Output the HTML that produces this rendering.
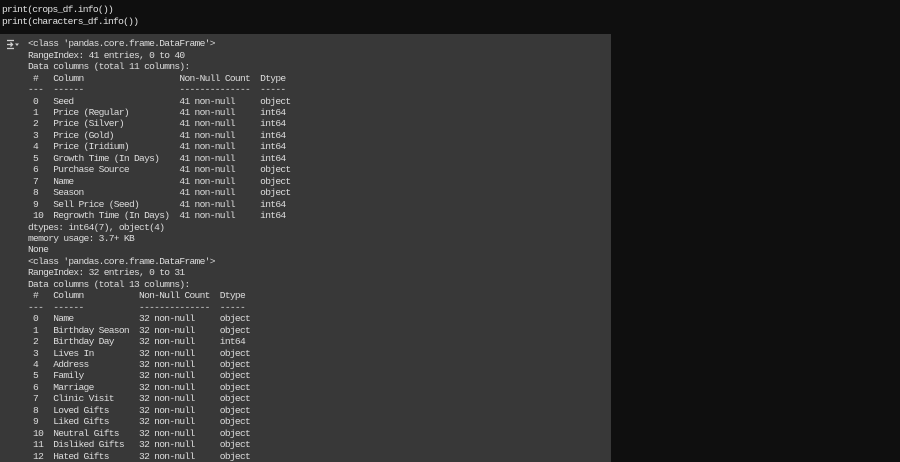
<!DOCTYPE html>
<html><head><meta charset="utf-8"><style>
html,body{margin:0;padding:0;width:900px;height:462px;overflow:hidden;background:#0f0f0f;}
pre{margin:0;font-family:"Liberation Mono","DejaVu Sans Mono",monospace;font-size:9.6px;letter-spacing:-0.71px;line-height:11.45px;color:#dcdcdc;position:absolute;white-space:pre;}
#code{left:2px;top:3.5px;line-height:12px;color:#e0e0e0;}
#panel{position:absolute;left:0;top:34px;width:611px;height:428px;background:#383838;}
#out{left:28px;top:38.3px;}
#icon{position:absolute;left:6px;top:39px;}
</style></head><body>
<pre id="code">print(crops_df.info())
print(characters_df.info())</pre>
<div id="panel"></div>
<svg id="icon" width="14" height="11" viewBox="0 0 14 11"><g stroke="#cfcfcf" stroke-width="1.3" fill="none"><path d="M1 1.5H8"/><path d="M1 9.5H8"/><path d="M1 5.5H6"/><path d="M4.5 3.5L6.5 5.5L4.5 7.5"/></g><path d="M9 4.5H13L11 7Z" fill="#cfcfcf"/></svg>
<pre id="out">&lt;class 'pandas.core.frame.DataFrame'&gt;
RangeIndex: 41 entries, 0 to 40
Data columns (total 11 columns):
 #   Column                   Non-Null Count  Dtype 
---  ------                   --------------  ----- 
 0   Seed                     41 non-null     object
 1   Price (Regular)          41 non-null     int64 
 2   Price (Silver)           41 non-null     int64 
 3   Price (Gold)             41 non-null     int64 
 4   Price (Iridium)          41 non-null     int64 
 5   Growth Time (In Days)    41 non-null     int64 
 6   Purchase Source          41 non-null     object
 7   Name                     41 non-null     object
 8   Season                   41 non-null     object
 9   Sell Price (Seed)        41 non-null     int64 
 10  Regrowth Time (In Days)  41 non-null     int64 
dtypes: int64(7), object(4)
memory usage: 3.7+ KB
None
&lt;class 'pandas.core.frame.DataFrame'&gt;
RangeIndex: 32 entries, 0 to 31
Data columns (total 13 columns):
 #   Column           Non-Null Count  Dtype 
---  ------           --------------  ----- 
 0   Name             32 non-null     object
 1   Birthday Season  32 non-null     object
 2   Birthday Day     32 non-null     int64 
 3   Lives In         32 non-null     object
 4   Address          32 non-null     object
 5   Family           32 non-null     object
 6   Marriage         32 non-null     object
 7   Clinic Visit     32 non-null     object
 8   Loved Gifts      32 non-null     object
 9   Liked Gifts      32 non-null     object
 10  Neutral Gifts    32 non-null     object
 11  Disliked Gifts   32 non-null     object
 12  Hated Gifts      32 non-null     object</pre>
</body></html>
